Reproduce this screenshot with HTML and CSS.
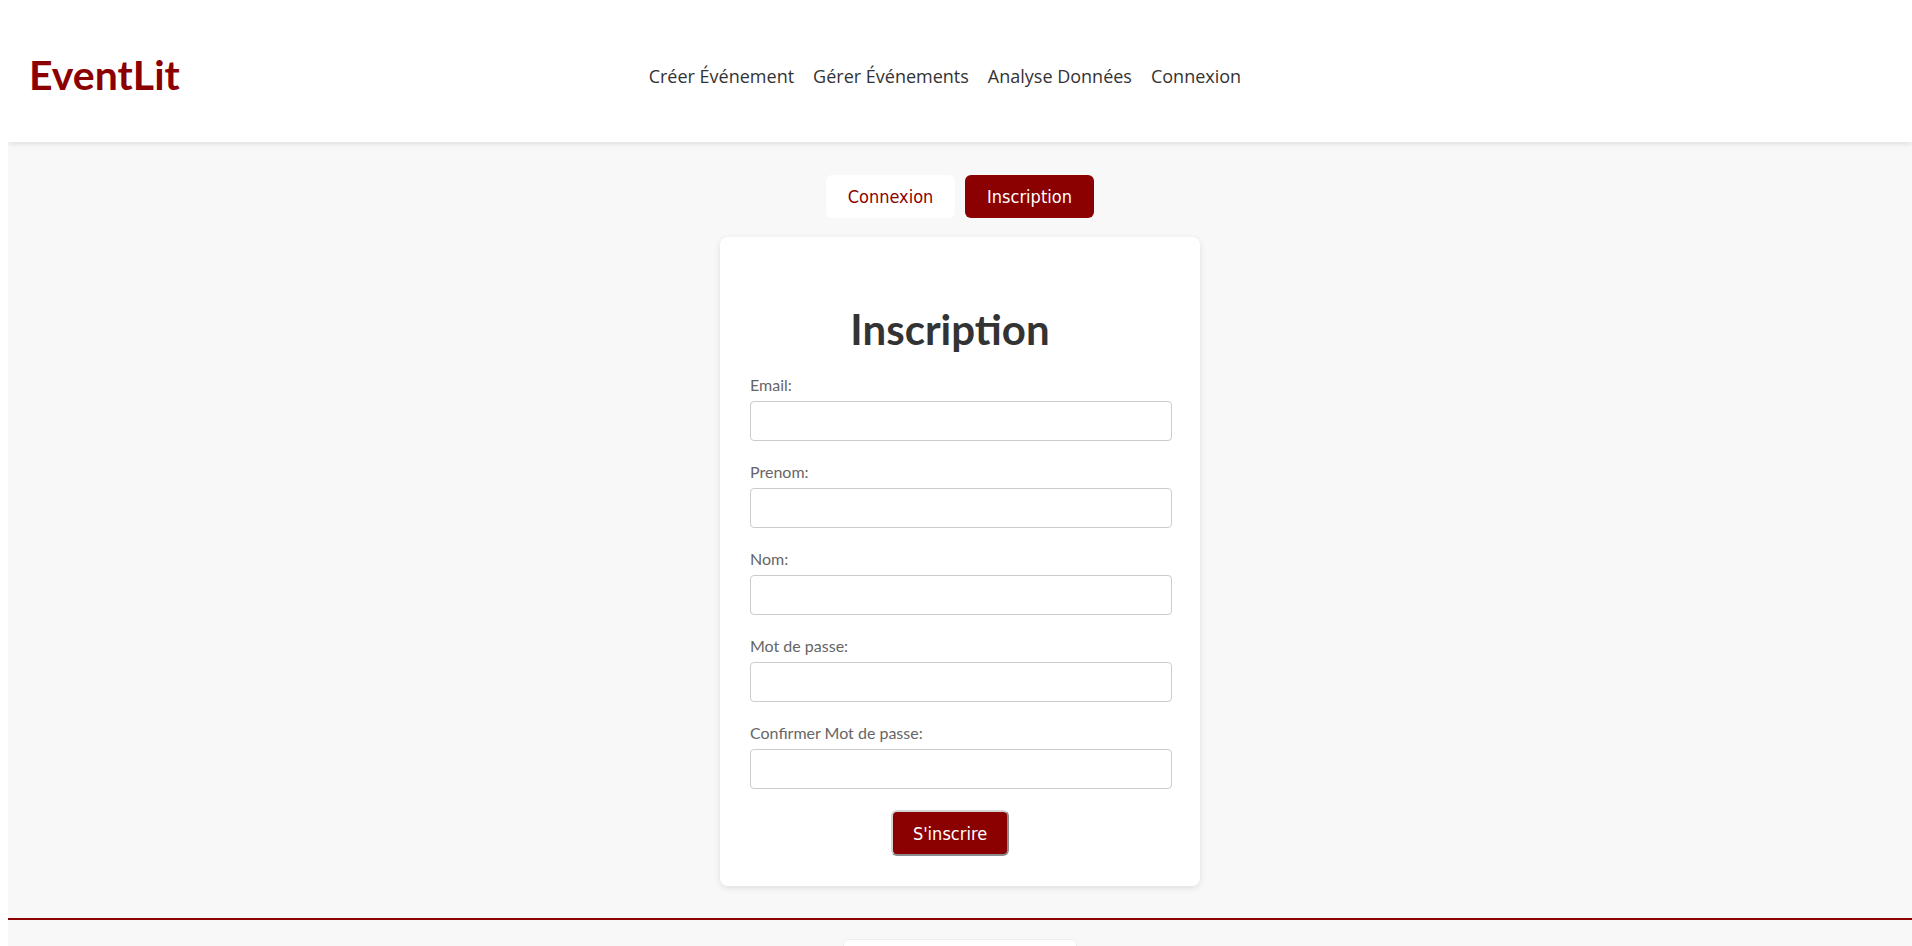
FILE: index.html
```html
<!DOCTYPE html>
<html lang="fr">
<head>
<meta charset="utf-8">
<title>EventLit - Inscription</title>
<link rel="stylesheet" href="styles.css">
</head>
<body>
<div class="app">
  <header class="header">
    <div class="logo">EventLit</div>
    <nav class="nav">
      <a href="#" class="nav-link">Créer Événement</a>
      <a href="#" class="nav-link">Gérer Événements</a>
      <a href="#" class="nav-link">Analyse Données</a>
      <a href="#" class="nav-link">Connexion</a>
    </nav>
    <div class="header-spacer"></div>
  </header>

  <main class="main">
    <div class="tabs">
      <button class="tab">Connexion</button>
      <button class="tab tab-active">Inscription</button>
    </div>

    <div class="card">
      <h2 class="card-title">Inscription</h2>
      <form class="form">
        <div class="form-group">
          <label class="label">Email:</label>
          <input class="input" type="email">
        </div>
        <div class="form-group">
          <label class="label">Prenom:</label>
          <input class="input" type="text">
        </div>
        <div class="form-group">
          <label class="label">Nom:</label>
          <input class="input" type="text">
        </div>
        <div class="form-group">
          <label class="label">Mot de passe:</label>
          <input class="input" type="password">
        </div>
        <div class="form-group">
          <label class="label">Confirmer Mot de passe:</label>
          <input class="input" type="password">
        </div>
        <div class="actions">
          <button type="button" class="submit">S'inscrire</button>
        </div>
      </form>
    </div>
  </main>

  <footer class="footer">
    <div class="footer-box"></div>
  </footer>
</div>
</body>
</html>
```

FILE: styles.css
```css
html, body {
  background: #ffffff;
}
body {
  margin: 8px 0 0 8px;
  font-family: Lato, "Open Sans", sans-serif;
  color: #333;
}
.app {
  background: #f8f8f8;
  min-height: 1000px;
}
.header {
  background: #ffffff;
  height: 134px;
  box-sizing: border-box;
  padding: 0 20px 0 21px;
  display: flex;
  align-items: center;
  justify-content: space-between;
  box-shadow: 0 2px 5px rgba(0, 0, 0, 0.1);
  position: relative;
}
.logo {
  font-size: 41px;
  font-weight: 700;
  color: #8b0000;
  line-height: 48px;
}
.nav {
  display: flex;
  gap: 19px;
  margin-top: 2px;
}
.nav-link {
  font-family: "Open Sans", sans-serif;
  font-size: 18px;
  color: #333;
  text-decoration: none;
}
.header-spacer {
  width: 182px;
}
.main {
  padding: 33px 0 32px;
  display: flex;
  flex-direction: column;
  align-items: center;
}
.tabs {
  display: flex;
  gap: 10px;
  margin-bottom: 19px;
}
.tab {
  width: 129px;
  height: 43px;
  border: none;
  border-radius: 6px;
  background: #ffffff;
  color: #8b0000;
  font-family: "DejaVu Sans Condensed", "DejaVu Sans", sans-serif;
  font-size: 18px;
  padding: 0;
}
.tab-active {
  background: #8b0000;
  color: #ffffff;
}
.card {
  width: 480px;
  box-sizing: border-box;
  background: #ffffff;
  border-radius: 8px;
  box-shadow: 0 2px 6px rgba(0, 0, 0, 0.1);
  padding: 30px 50px 30px 30px;
}
.card-title {
  margin: 37px 0 20px;
  text-align: center;
  font-size: 42px;
  line-height: 50px;
  font-weight: 700;
  color: #333;
}
.form-group {
  margin-bottom: 20px;
}
.label {
  display: block;
  font-size: 16px;
  line-height: 22px;
  color: #666;
  margin-bottom: 5px;
}
.input {
  display: block;
  width: 100%;
  height: 18px;
  padding: 10px;
  box-sizing: content-box;
  border: 1px solid #ccc;
  border-radius: 4px;
  background: #fff;
  margin: 0;
}
.actions {
  display: flex;
  justify-content: center;
  padding-top: 1px;
}
.submit {
  height: 46px;
  box-sizing: border-box;
  padding: 0 20px;
  background: #8b0000;
  color: #ffffff;
  font-family: "DejaVu Sans Condensed", "DejaVu Sans", sans-serif;
  font-size: 18px;
  border-width: 2px;
  border-style: solid;
  border-color: #d4d4d4 #8c8c8c #8c8c8c #d4d4d4;
  border-radius: 6px;
}
.footer {
  border-top: 2px solid #8b0000;
  padding-top: 19px;
  display: flex;
  justify-content: center;
}
.footer-box {
  width: 234px;
  height: 60px;
  background: #ffffff;
  border: 1px solid #eeeeee;
  border-radius: 6px;
  box-sizing: border-box;
}
```
